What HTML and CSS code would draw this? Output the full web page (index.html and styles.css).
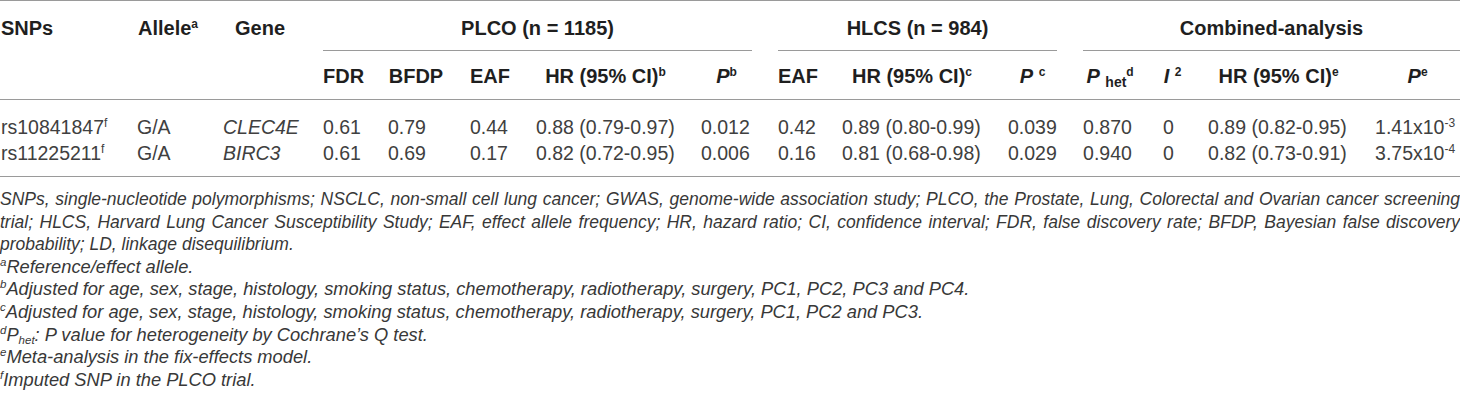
FILE: index.html
```html
<!DOCTYPE html>
<html lang="en">
<head>
<meta charset="utf-8">
<title>SNP survival association table</title>
<link rel="stylesheet" href="styles.css">
</head>
<body>
<div class="table-wrap">
  <table class="results">
    <colgroup>
      <col class="w-snp"><col class="w-allele"><col class="w-gene">
      <col class="w-fdr"><col class="w-bfdp"><col class="w-eaf"><col class="w-hr"><col class="w-p">
      <col class="w-eaf2"><col class="w-hr2"><col class="w-p2">
      <col class="w-phet"><col class="w-i2"><col class="w-hr3"><col class="w-p3">
    </colgroup>
    <thead>
      <tr class="row-groups">
        <th class="lead" rowspan="2">SNPs</th>
        <th class="lead" rowspan="2">Allele<sup>a</sup></th>
        <th class="stub" rowspan="2">Gene</th>
        <th class="group" colspan="5"><div class="group-label">PLCO (n = 1185)</div></th>
        <th class="group" colspan="3"><div class="group-label">HLCS (n = 984)</div></th>
        <th class="group last" colspan="4"><div class="group-label">Combined-analysis</div></th>
      </tr>
      <tr class="row-cols">
        <th>FDR</th>
        <th>BFDP</th>
        <th>EAF</th>
        <th>HR (95% CI)<sup>b</sup></th>
        <th><i>P</i><sup>b</sup></th>
        <th>EAF</th>
        <th>HR (95% CI)<sup>c</sup></th>
        <th><i>P</i> <sup>c</sup></th>
        <th><i>P</i> <sub>het</sub><sup>d</sup></th>
        <th><i>I</i> <sup>2</sup></th>
        <th>HR (95% CI)<sup>e</sup></th>
        <th class="last"><i>P</i><sup>e</sup></th>
      </tr>
    </thead>
    <tbody>
      <tr class="first">
        <td class="lead">rs10841847<sup>f</sup></td>
        <td>G/A</td>
        <td><i>CLEC4E</i></td>
        <td>0.61</td>
        <td>0.79</td>
        <td>0.44</td>
        <td>0.88 (0.79-0.97)</td>
        <td>0.012</td>
        <td>0.42</td>
        <td>0.89 (0.80-0.99)</td>
        <td>0.039</td>
        <td>0.870</td>
        <td>0</td>
        <td>0.89 (0.82-0.95)</td>
        <td class="last">1.41x10<sup>-3</sup></td>
      </tr>
      <tr class="final">
        <td class="lead">rs11225211<sup>f</sup></td>
        <td>G/A</td>
        <td><i>BIRC3</i></td>
        <td>0.61</td>
        <td>0.69</td>
        <td>0.17</td>
        <td>0.82 (0.72-0.95)</td>
        <td>0.006</td>
        <td>0.16</td>
        <td>0.81 (0.68-0.98)</td>
        <td>0.029</td>
        <td>0.940</td>
        <td>0</td>
        <td>0.82 (0.73-0.91)</td>
        <td class="last">3.75x10<sup>-4</sup></td>
      </tr>
    </tbody>
  </table>
  <div class="notes">
    <p class="abbrev">SNPs, single-nucleotide polymorphisms; NSCLC, non-small cell lung cancer; GWAS, genome-wide association study; PLCO, the Prostate, Lung, Colorectal and Ovarian cancer screening trial; HLCS, Harvard Lung Cancer Susceptibility Study; EAF, effect allele frequency; HR, hazard ratio; CI, confidence interval; FDR, false discovery rate; BFDP, Bayesian false discovery probability; LD, linkage disequilibrium.</p>
    <p class="note"><sup>a</sup>Reference/effect allele.</p>
    <p class="note"><sup>b</sup>Adjusted for age, sex, stage, histology, smoking status, chemotherapy, radiotherapy, surgery, PC1, PC2, PC3 and PC4.</p>
    <p class="note"><sup>c</sup>Adjusted for age, sex, stage, histology, smoking status, chemotherapy, radiotherapy, surgery, PC1, PC2 and PC3.</p>
    <p class="note"><sup>d</sup>P<sub>het</sub>: P value for heterogeneity by Cochrane’s Q test.</p>
    <p class="note"><sup>e</sup>Meta-analysis in the fix-effects model.</p>
    <p class="note"><sup>f</sup>Imputed SNP in the PLCO trial.</p>
  </div>
</div>
</body>
</html>
```

FILE: styles.css
```css
html, body {
  margin: 0;
  padding: 0;
  background: #ffffff;
}

body {
  font-family: "Liberation Sans", Arial, sans-serif;
  color: #2b2b2b;
}

.table-wrap {
  width: 1460px;
}

.results {
  width: 1460px;
  table-layout: fixed;
  border-collapse: collapse;
  border-top: 1px solid #9a9a9a;
  border-bottom: 1px solid #9a9a9a;
  font-size: 19.5px;
}

.results thead {
  border-bottom: 1px solid #9a9a9a;
}

.w-snp { width: 137px; }
.w-allele { width: 86px; }
.w-gene { width: 100px; }
.w-fdr { width: 65px; }
.w-bfdp { width: 82px; }
.w-eaf { width: 66px; }
.w-hr { width: 165px; }
.w-p { width: 77px; }
.w-eaf2 { width: 64px; }
.w-hr2 { width: 166px; }
.w-p2 { width: 75px; }
.w-phet { width: 80px; }
.w-i2 { width: 45px; }
.w-hr3 { width: 167px; }
.w-p3 { width: 85px; }

.results th,
.results td {
  padding: 0 26px 0 0;
  line-height: 26px;
  white-space: nowrap;
  vertical-align: top;
}

.results th {
  font-weight: bold;
  font-size: 20px;
  color: #1f1f1f;
  text-align: center;
}

.results th.lead,
.results td.lead {
  text-align: left;
  padding-left: 1px;
}

.results th.last,
.results td.last {
  padding-right: 0;
}

.row-groups th {
  padding-top: 14px;
}

.group-label {
  padding-bottom: 9px;
  border-bottom: 1px solid #9a9a9a;
}

.row-cols th {
  padding-top: 12px;
  padding-bottom: 10px;
}

.results td {
  text-align: left;
  color: #404040;
}

.results tr.first td {
  padding-top: 14px;
}

.results tr.final td {
  padding-bottom: 10px;
}

sup, sub {
  font-size: 12px;
  line-height: 0;
}

sup {
  vertical-align: 7px;
}

sub {
  vertical-align: -4px;
}

th sub {
  font-size: 14px;
}

.notes {
  margin-top: 11px;
  font-style: italic;
  line-height: 22.6px;
  color: #383838;
}

.notes p {
  margin: 0;
}

.notes .abbrev {
  font-size: 17.5px;
  text-align: justify;
}

.notes .note {
  font-size: 18.3px;
}

.notes sup {
  font-size: 11.5px;
  vertical-align: 7px;
}

.notes sub {
  font-size: 11.5px;
  vertical-align: -3px;
}
```
